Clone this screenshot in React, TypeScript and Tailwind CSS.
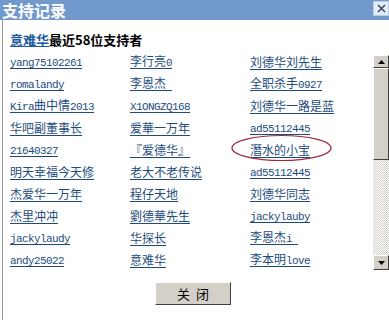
import React from "react";

const cjk = '"Noto Sans CJK SC", "Noto Sans", sans-serif';

function T({ s }: { s: string }) {
  const parts = s.match(/[\x00-\x7f]+|[^\x00-\x7f]+/g) || [];
  return (
    <>
      {parts.map((p, i) =>
        /^[\x00-\x7f]+$/.test(p) ? (
          <span
            key={i}
            className="text-[11px] tracking-[-0.6px] whitespace-pre"
            style={{ fontFamily: '"Liberation Mono", monospace' }}
          >
            {p}
          </span>
        ) : (
          <span key={i}>{p}</span>
        )
      )}
    </>
  );
}

const cols: string[][] = [
  ["yang75102261", "romalandy", "Kira曲中情2013", "华吧副董事长", "21640327", "明天幸福今天修", "杰爱华一万年", "杰里冲冲", "jackylaudy", "andy25022"],
  ["李行亮0", "李恩杰 ", "X1ONGZQ168", "爱華一万年", "『爱德华』", "老大不老传说", "程仔天地", "劉德華先生", "华探长", "意难华"],
  ["刘德华刘先生", "全职杀手0927", "刘德华一路是蓝", "ad55112445", "潛水的小宝", "ad55112445", "刘德华同志", "jackylauby", "李恩杰i ", "李本明love"],
];

export default function App() {
  const rows = Array.from({ length: 10 }, (_, r) => cols.map((c) => c[r]));
  return (
    <div
      className="relative w-[389px] h-[320px] overflow-hidden bg-white"
      style={{ fontFamily: cjk }}
    >
      {/* title bar */}
      <div className="flex h-[20px] items-start justify-between bg-[#7199cb]">
        <div className="pl-[2px] text-[16px] font-bold leading-[20px] text-white">
          支持记录
        </div>
        <div className="mt-[1px] flex h-[15px] w-[16px] items-center justify-center border border-[#b9cce6] bg-[#e4ecf6]">
          <svg width="9" height="9" viewBox="0 0 9 9">
            <path d="M1 1L8 8M8 1L1 8" stroke="#3a4e6a" strokeWidth="1.6" />
          </svg>
        </div>
      </div>

      {/* body */}
      <div className="ml-[2px] h-[300px] border-l border-[#9a9a9a]">
        <div className="pl-[7px] pt-[13px] text-[13px] font-bold leading-[14px] text-black">
          <span className="text-[#1b58a0] underline">意难华</span>
          最近58位支持者
        </div>

        <div className="mt-[4px] flex">
          <div className="w-[372px] pl-[7px]">
            {rows.map((row, r) => (
              <div key={r} className="flex h-[22px] items-center text-[12px] leading-[14px]">
                {row.map((name, c) => (
                  <div key={c} className="w-[120px]">
                    <span className="cursor-pointer text-[#1d4c7c] underline underline-offset-2">
                      <T s={name} />
                    </span>
                  </div>
                ))}
              </div>
            ))}
          </div>

          {/* scrollbar */}
          <div className="mt-[4px] flex h-[215px] w-[16px] shrink-0 flex-col">
            <div className="flex h-[13px] items-center justify-center border border-t-white border-l-white border-r-[#404040] border-b-[#404040] bg-[#d4d0c8]">
              <svg width="7" height="4" viewBox="0 0 7 4">
                <path d="M3.5 0L7 4H0Z" fill="#000" />
              </svg>
            </div>
            <div className="h-[92px] border border-t-white border-l-white border-r-[#404040] border-b-[#404040] bg-[#d4d0c8]" />
            <div className="flex-1 bg-[repeating-conic-gradient(#d4d0c8_0_25%,#ffffff_0_50%)] bg-[length:2px_2px]" />
            <div className="flex h-[15px] items-center justify-center border border-t-white border-l-white border-r-[#404040] border-b-[#404040] bg-[#d4d0c8]">
              <svg width="7" height="4" viewBox="0 0 7 4">
                <path d="M0 0H7L3.5 4Z" fill="#000" />
              </svg>
            </div>
          </div>
        </div>

        <div className="mt-[11px] pl-[152px]">
          <button className="flex h-[23px] w-[76px] items-center justify-center border border-t-white border-l-white border-r-[#404040] border-b-[#404040] bg-[#d4d0c8] text-[13px] leading-none text-black">
            关&nbsp;&nbsp;闭
          </button>
        </div>
      </div>

      {/* annotation ellipse */}
      <svg
        className="pointer-events-none absolute left-[231px] top-[134px]"
        width="101"
        height="28"
        viewBox="0 0 101 28"
      >
        <ellipse cx="50.5" cy="14" rx="49.5" ry="12.5" fill="none" stroke="#a3283a" strokeWidth="1.2" />
      </svg>
    </div>
  );
}
